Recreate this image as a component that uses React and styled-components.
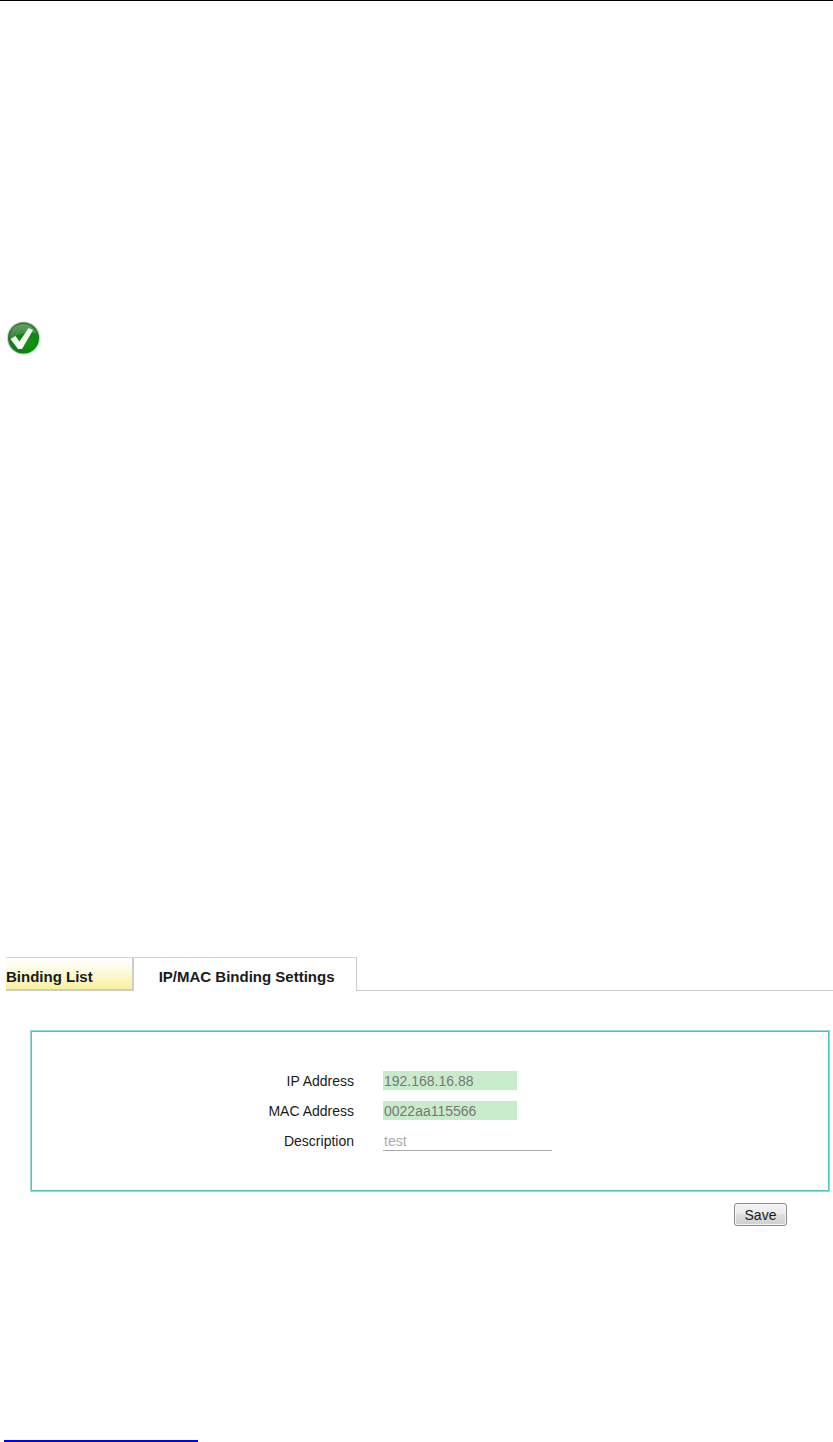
import React, { useState } from 'react';
import styled, { createGlobalStyle } from 'styled-components';

const GlobalStyle = createGlobalStyle`
  body {
    margin: 0;
    background-color: #fff;
    font-family: 'Liberation Sans', Arial, sans-serif;
    font-size: 14px;
    color: #1a1a1a;
  }
`;

const Page = styled.div`
  display: flex;
  flex-direction: column;
  border-top: 1px solid #000;
`;

const Status = styled.div`
  height: 34px;
  padding: 320px 0 0 6px;
  margin-bottom: 602px;
`;

const Tabs = styled.nav`
  display: flex;
  margin-left: 6px;
`;

const Tab = styled.button`
  box-sizing: border-box;
  height: 34px;
  padding: ${p => (p.$active ? '4px 22px 0 25px' : '6px 39px 0 0')};
  border: 0 solid #ccc;
  border-top: 1px solid #d4d4d4;
  border-right-width: ${p => (p.$active ? '1px' : '2px')};
  border-bottom-width: ${p => (p.$active ? '0' : '2px')};
  background: ${p => (p.$active ? '#fff' : 'linear-gradient(#fff, #fdfbe0 40%, #f8f0a0)')};
  font: bold 15px 'Liberation Sans', Arial, sans-serif;
  color: #1a1a1a;
  white-space: nowrap;
  cursor: pointer;
`;

const TabRule = styled.div`
  flex: 1;
  border-bottom: 1px solid #ccc;
`;

const Form = styled.form`
  display: flex;
  flex-direction: column;
  margin: 39px 3px 0 30px;
`;

const Panel = styled.div`
  display: flex;
  flex-direction: column;
  gap: 11px;
  padding: 40px 1px;
  border: 1px solid #93dcd8;
  box-shadow: inset 0 0 0 1px #4fc3bd;
`;

const Row = styled.div`
  display: grid;
  grid-template-columns: 322px 1fr;
  column-gap: 29px;
  align-items: center;
`;

const Label = styled.label`
  text-align: right;
`;

const Input = styled.input`
  box-sizing: border-box;
  width: ${p => (p.$wide ? '169px' : '134px')};
  height: ${p => (p.$wide ? '20px' : '19px')};
  padding: 0 1px;
  border: 0;
  border-bottom: ${p => (p.$wide ? '1px solid #aaa' : '0')};
  background-color: ${p => (p.$wide ? '#fff' : '#c8eccb')};
  font: 14px 'Liberation Sans', Arial, sans-serif;
  color: ${p => (p.$wide ? '#aaa' : '#777')};
  outline: 0;
`;

const SaveButton = styled.button`
  box-sizing: border-box;
  align-self: flex-end;
  width: 53px;
  height: 23px;
  margin: 11px 43px 0 0;
  padding: 0;
  border: 1px solid #8a8a8a;
  border-radius: 3px;
  box-shadow: inset 0 0 0 1px #f6f6f6;
  background: linear-gradient(#f2f2f2, #ebebeb 50%, #dedede 50%, #d0d0d0);
  font: 14px 'Liberation Sans', Arial, sans-serif;
  color: #1a1a1a;
`;

const FooterLink = styled.a`
  width: 194px;
  height: 16px;
  margin: 198px 0 0 4px;
  border-bottom: 2px solid #00f;
`;

function CheckIcon() {
  return (
    <svg width="36" height="36" viewBox="0 0 36 36" role="img" aria-label="Enabled">
      <defs>
        <radialGradient id="ball" cx="68%" cy="66%" r="75%">
          <stop offset="0" stopColor="#0a9a0a" />
          <stop offset="0.5" stopColor="#108012" />
          <stop offset="1" stopColor="#2d7235" />
        </radialGradient>
        <linearGradient id="gloss" x1="0" y1="0" x2="0" y2="1">
          <stop offset="0" stopColor="#fff" stopOpacity="0.3" />
          <stop offset="1" stopColor="#fff" stopOpacity="0.08" />
        </linearGradient>
      </defs>
      <circle cx="17.5" cy="17" r="16.5" fill="#b9d5ba" />
      <circle cx="17.5" cy="17" r="15.5" fill="url(#ball)" />
      <path d="M4 18C3 8 10 3 17 3s13 5 14 10C22 10 12 13 4 18z" fill="url(#gloss)" />
      <path d="M4.500 18l5-3 4 5.500L22.500 7l4.500 2L16 28h-4z" fill="#f8fff5" />
    </svg>
  );
}

const fields = [
  { id: 'ip', label: 'IP Address', value: '192.168.16.88' },
  { id: 'mac', label: 'MAC Address', value: '0022aa115566' },
  { id: 'description', label: 'Description', value: 'test', wide: true },
];

function App() {
  const [tab, setTab] = useState('settings');

  return (
    <Page>
      <GlobalStyle />
      <Status>
        <CheckIcon />
      </Status>
      <Tabs>
        <Tab type="button" $active={tab === 'list'} onClick={() => setTab('list')}>
          Binding List
        </Tab>
        <Tab type="button" $active={tab === 'settings'} onClick={() => setTab('settings')}>
          IP/MAC Binding Settings
        </Tab>
        <TabRule />
      </Tabs>
      <Form onSubmit={e => e.preventDefault()}>
        <Panel>
          {fields.map(field => (
            <Row key={field.id}>
              <Label htmlFor={field.id}>{field.label}</Label>
              <Input id={field.id} defaultValue={field.value} $wide={field.wide} />
            </Row>
          ))}
        </Panel>
        <SaveButton type="submit">Save</SaveButton>
      </Form>
      <FooterLink href="#top" aria-label="Back to top" />
    </Page>
  );
}

export default App;
